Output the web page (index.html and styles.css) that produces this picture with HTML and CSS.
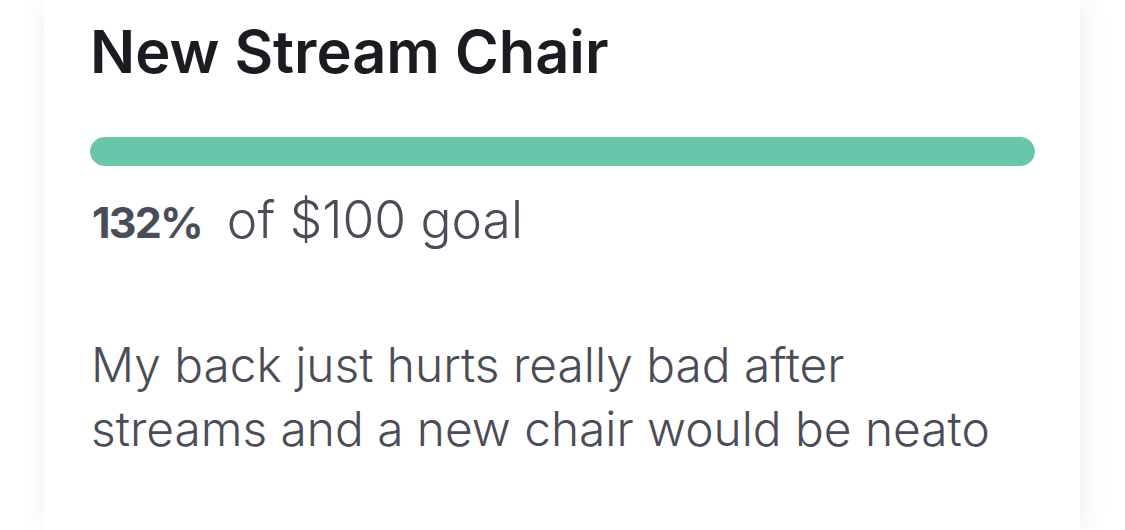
FILE: index.html
```html
<!DOCTYPE html>
<html lang="en">
<head>
<meta charset="utf-8">
<title>New Stream Chair</title>
<link rel="stylesheet" href="styles.css">
</head>
<body>
<div class="page">
  <section class="card">
    <h1 class="title">New Stream Chair</h1>
    <div class="bar"><div class="fill" style="width:100%"></div></div>
    <p class="progress"><span class="pct">132%</span><span class="goal">of $100 goal</span></p>
    <p class="desc">My back just hurts really bad after streams and a new chair would be neato</p>
  </section>
</div>
</body>
</html>
```
FILE: styles.css
```css
html, body {
  margin: 0;
  padding: 0;
  background: #ffffff;
}
body {
  font-family: Inter, "Noto Sans", sans-serif;
  overflow: hidden;
  height: 530px;
}
.page {
  padding: 0 45px 0 44px;
  height: 100%;
}
.card {
  background: #ffffff;
  box-shadow: 3px 0 28px rgba(0, 0, 0, 0.07);
  height: 100%;
  padding: 15px 45px 0 46px;
  box-sizing: border-box;
}
.title {
  margin: 0;
  font-size: 59.5px;
  line-height: 72px;
  font-weight: 600;
  color: #1b1b22;
}
.bar {
  margin-top: 50px;
  height: 29px;
  border-radius: 15px;
  background: #e8ecef;
  overflow: hidden;
}
.fill {
  height: 100%;
  background: #68c6ab;
  border-radius: 15px;
}
.progress {
  margin: 25px 0 0 2px;
  font-size: 51.5px;
  line-height: 56px;
  height: 56px;
  color: #4a4d57;
}
.pct {
  font-size: 43px;
  font-weight: 700;
  letter-spacing: -1.8px;
  margin-right: 25px;
}
.goal {
  font-weight: 300;
}
.desc {
  margin: 86px 0 0 1px;
  font-size: 47.8px;
  line-height: 64px;
  font-weight: 300;
  color: #4a4d57;
  max-width: 930px;
}
```
